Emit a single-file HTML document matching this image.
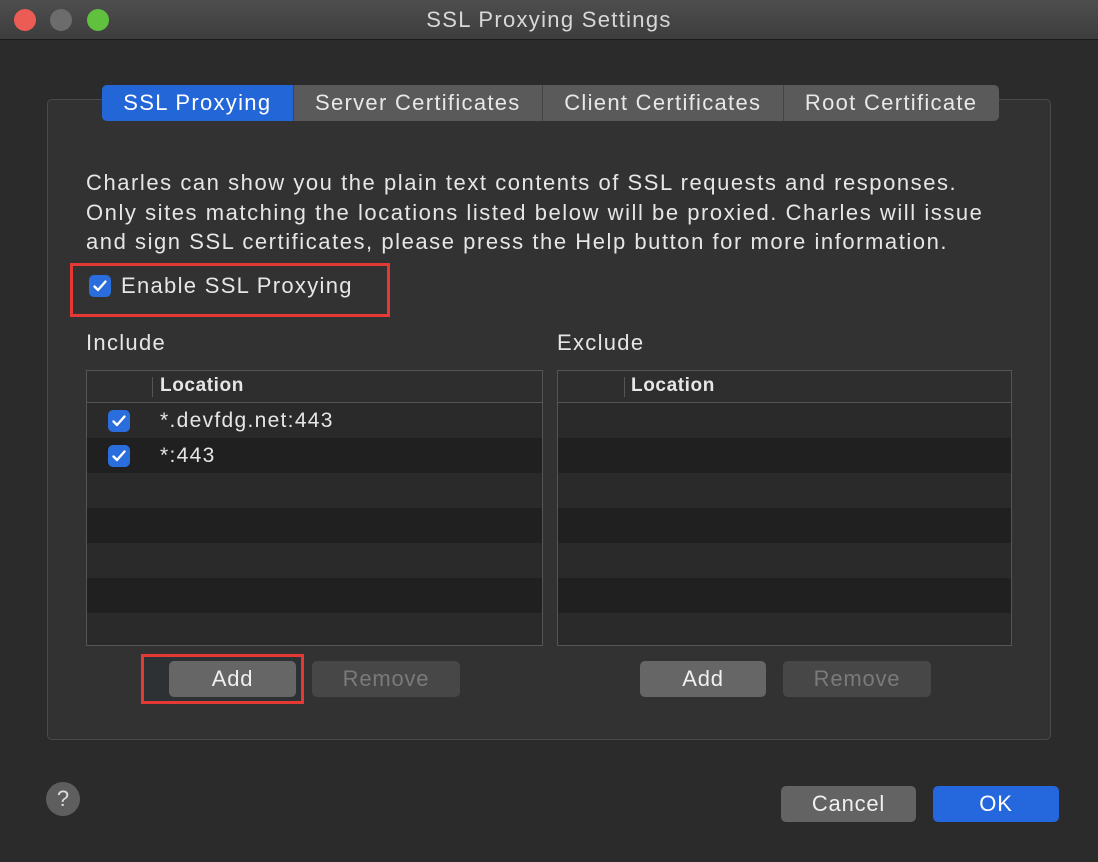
<!DOCTYPE html>
<html><head><meta charset="utf-8"><style>
*{margin:0;padding:0;box-sizing:border-box}
body{width:1098px;height:862px;background:#2b2b2b;font-family:"Liberation Sans",sans-serif;color:#e6e6e6;position:relative;overflow:hidden;letter-spacing:1.3px}
.a{position:absolute}
.title{left:0;top:0;width:1098px;height:40px;background:linear-gradient(#4e4e4e,#3d3d3d);border-bottom:1px solid #1a1a1a;text-align:center;font-size:22px;line-height:40px;color:#d8d8d8}
.dot{width:22px;height:22px;border-radius:50%;top:9px}
.group{left:47px;top:99px;width:1004px;height:641px;background:#323232;border:1px solid #4a4a4a;border-radius:5px}
.tabs{left:102px;top:85px;height:36px;display:flex;border-radius:5px;overflow:hidden;background:#5a5a5a;font-size:22px;line-height:36px}
.tabs div{padding:0 21.3px;color:#e8e8e8;border-right:1px solid #444}
.tabs .on{background:#2366d8;color:#fff}
.p{font-size:22px;line-height:29.5px;letter-spacing:1.55px}
.cb{width:22px;height:22px;border-radius:5px;background:#2a6ddc;display:flex;align-items:center;justify-content:center}
.tbl{top:370px;width:457px;height:276px;border:1px solid #555;background:#2a2a2a;overflow:hidden}
.hd{height:32px;border-bottom:1px solid #555;background:#2e2e2e;font-size:19px;line-height:30px;position:relative;font-weight:bold;letter-spacing:0.6px}
.row{height:35px;position:relative}
.dk{background:#202020}
.btn{height:36px;border-radius:5px;background:#666;text-align:center;font-size:22px;line-height:36px;color:#f0f0f0;letter-spacing:0.8px}
.dis{background:#474747;color:#7a7a7a}
.red{border:3px solid #e53935}
</style></head><body>
<div class="a title">SSL Proxying Settings</div>
<div class="a dot" style="left:14px;background:#ed5b55"></div>
<div class="a dot" style="left:50px;background:#6c6c6c"></div>
<div class="a dot" style="left:87px;background:#5fc13e"></div>
<div class="a group"></div>
<div class="a tabs"><div class="on">SSL Proxying</div><div>Server Certificates</div><div>Client Certificates</div><div style="border:none">Root Certificate</div></div>
<div class="a p" style="left:86px;top:168px;width:960px">Charles can show you the plain text contents of SSL requests and responses.<br>Only sites matching the locations listed below will be proxied. Charles will issue<br>and sign SSL certificates, please press the Help button for more information.</div>
<div class="a red" style="left:70px;top:263px;width:320px;height:54px"></div>
<div class="a cb" style="left:89px;top:275px"><svg width="16" height="16" viewBox="0 0 16 16"><path d="M2.5 8.5l3.5 3.5 7.5-8.5" stroke="#fff" stroke-width="2.4" fill="none" stroke-linecap="round" stroke-linejoin="round"/></svg></div>
<div class="a" style="left:121px;top:273px;font-size:22px">Enable SSL Proxying</div>
<div class="a" style="left:86px;top:330px;font-size:22px">Include</div>
<div class="a" style="left:557px;top:330px;font-size:22px">Exclude</div>
<div class="a tbl" style="left:86px">
<div class="hd"><span style="position:absolute;left:65px;top:6px;height:20px;border-left:1px solid #555"></span><span style="position:absolute;left:73px">Location</span></div>
<div class="row"><div class="a cb" style="left:21px;top:7px"><svg width="16" height="16" viewBox="0 0 16 16"><path d="M2.5 8.5l3.5 3.5 7.5-8.5" stroke="#fff" stroke-width="2.4" fill="none" stroke-linecap="round" stroke-linejoin="round"/></svg></div><span class="a" style="left:73px;top:6px;font-size:21px">*.devfdg.net:443</span></div>
<div class="row dk"><div class="a cb" style="left:21px;top:7px"><svg width="16" height="16" viewBox="0 0 16 16"><path d="M2.5 8.5l3.5 3.5 7.5-8.5" stroke="#fff" stroke-width="2.4" fill="none" stroke-linecap="round" stroke-linejoin="round"/></svg></div><span class="a" style="left:73px;top:6px;font-size:21px">*:443</span></div>
<div class="row"></div><div class="row dk"></div><div class="row"></div><div class="row dk"></div><div class="row"></div>
</div>
<div class="a tbl" style="left:557px;width:455px">
<div class="hd"><span style="position:absolute;left:66px;top:6px;height:20px;border-left:1px solid #555"></span><span style="position:absolute;left:73px">Location</span></div>
<div class="row"></div><div class="row dk"></div><div class="row"></div><div class="row dk"></div><div class="row"></div><div class="row dk"></div><div class="row"></div>
</div>
<div class="a red" style="left:141px;top:654px;width:163px;height:50px;background:#2e3133"></div>
<div class="a btn" style="left:169px;top:661px;width:127px">Add</div>
<div class="a btn dis" style="left:312px;top:661px;width:148px">Remove</div>
<div class="a btn" style="left:640px;top:661px;width:126px">Add</div>
<div class="a btn dis" style="left:783px;top:661px;width:148px">Remove</div>
<div class="a" style="left:46px;top:782px;width:34px;height:34px;border-radius:50%;background:#5e5e5e;text-align:center;line-height:34px;font-size:22px;color:#ddd;letter-spacing:0">?</div>
<div class="a btn" style="left:781px;top:786px;width:135px;background:#636363">Cancel</div>
<div class="a btn" style="left:933px;top:786px;width:126px;background:#2567dc;color:#fff">OK</div>
</body></html>
